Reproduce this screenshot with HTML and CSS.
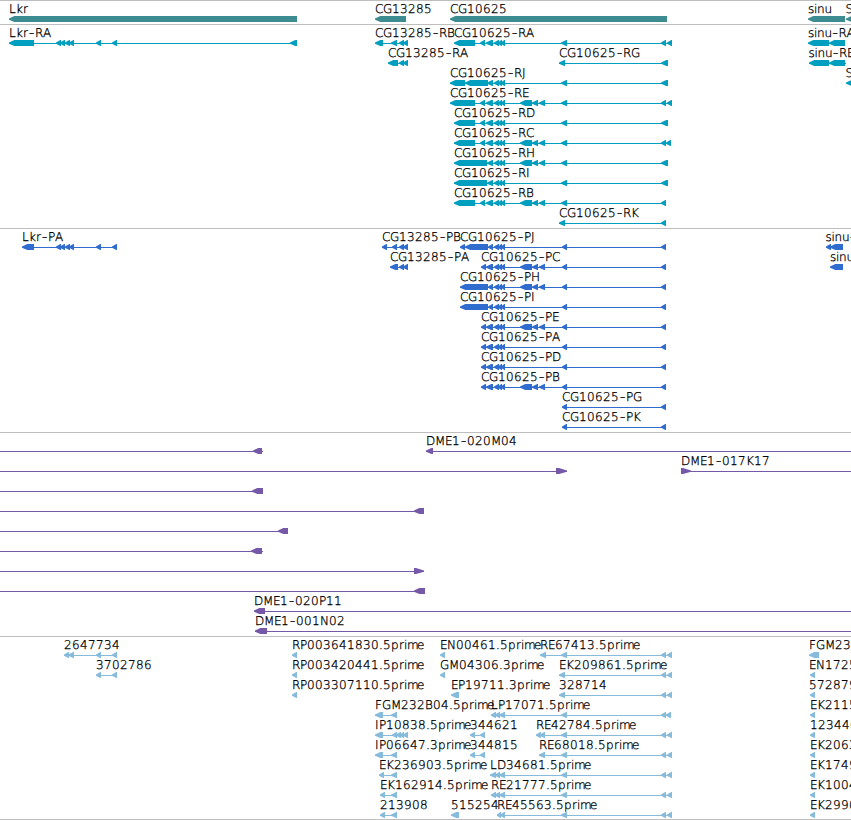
FILE: index.html
```
<!DOCTYPE html>
<html lang="en">
<head>
    <meta charset="UTF-8">
    <meta name="viewport" content="width=device-width, initial-scale=1.0">
    <title>Genome Browser</title>
    <link rel="stylesheet" href="styles.css">
</head>
<body>
    <main class="browser">
        <section class="track gene" id="gene"></section>
        <section class="track transcript" id="transcript"></section>
        <section class="track protein" id="protein"></section>
        <section class="track clone" id="clone"></section>
        <section class="track est" id="est"></section>
    </main>
    <script src="tracks.js"></script>
</body>
</html>
```

FILE: styles.css
```
body {
    margin: 0;
    background-color: #fff;
    overflow: hidden;
}
.browser {
    display: flex;
    flex-direction: column;
    width: 851px;
    height: 820px;
}
.track {
    box-sizing: border-box;
    padding-bottom: 3px;
    border-top: 1px solid #bebebe;
}
.row {
    display: block;
    width: 100%;
    height: 20px;
    overflow: hidden;
}
.row + .row {
    overflow: visible;
}
.label {
    font-family: "DejaVu Sans Light", "DejaVu Sans", sans-serif;
    font-weight: 200;
    font-size: 12px;
    fill: #000;
    stroke: #000;
    stroke-width: 0.3px;
    text-rendering: geometricPrecision;
}
.dash {
    font-size: 16px;
}
.gene {
    fill: #3d8c91;
}
.transcript {
    fill: #009fbf;
}
.protein {
    fill: #306bce;
}
.clone {
    fill: #7558a8;
}
.est {
    height: 184px;
    padding-bottom: 2px;
    border-bottom: 1px solid #bebebe;
    fill: #86bbdc;
}
.gene .row,
.transcript .row,
.protein .row,
.clone .row,
.est .row {
    overflow: visible;
}
```

FILE: tracks.js
```
// Each row is a list of features: [label, blocks, options]
// blocks are "start-end" pairs, options: right, from, to (extent of the line), x (label)
const small = ' 494-499 498-502 501-505';
const exons = ' 520-532 532-538 539-545';
const utr = '454-475 480-485 486-493' + small;
const cds = '481-486 486-493' + small;
const mid = ' 561-567';
const pEnd = ' 562-567 661-666';
const eEnd = ' 661-666 667-672';

const tracks = {
    gene: [
        [['Lkr', '9-297'], ['CG13285', '375-406'], ['CG10625', '450-667'], ['sinu', '808-845'], ['S', '846-870', {x: 845.5}]]
    ],
    transcript: [
        [['Lkr-RA', '9-34 56-61 60-65 65-70 69-74 96-101 112-117 290-297'],
         ['CG13285-RB', '375-383 391-397 399-404 403-408'],
         ['CG10625-RA', utr + mid + eEnd],
         ['sinu-RA', '808-829 829-845']],
        [['CG13285-RA', '388-398 399-404 403-408'],
         ['CG10625-RG', '559-565 661-668'],
         ['sinu-RE', '809-829 829-845', {to: 846, x: 808.5}]],
        [['CG10625-RJ', '450-465 465-488 487-493' + small + mid + ' 661-668'],
         ['S', '846-860', {x: 845.5}]],
        [['CG10625-RE', '450-475 480-485 486-493' + small + exons + mid + eEnd]],
        [['CG10625-RD', utr + mid + ' 661-668']],
        [['CG10625-RC', utr + exons + mid + ' 661-666 666-671']],
        [['CG10625-RH', '454-487 487-493' + small + exons + mid + ' 661-668']],
        [['CG10625-RI', '454-487 487-493' + small + mid + ' 661-668']],
        [['CG10625-RB', utr + exons + mid + ' 661-666']],
        [['CG10625-RK', '559-565 661-666']]
    ],
    protein: [
        [['Lkr-PA', '22-34 56-61 60-65 65-70 69-74 96-101 112-117'],
         ['CG13285-PB', '382-387 392-397 399-404 403-408'],
         ['CG10625-PJ', '460-465 465-488 488-493' + small + pEnd],
         ['sinu-PA', '826-831 830-843', {x: 825.5}]],
        [['CG13285-PA', '390-398 399-404 403-408'],
         ['CG10625-PC', cds + exons + pEnd],
         ['sinu-PE', '830-843']],
        [['CG10625-PH', '460-488 488-493' + small + exons + pEnd]],
        [['CG10625-PI', '460-488 488-493' + small + pEnd]],
        [['CG10625-PE', cds + exons + pEnd]],
        [['CG10625-PA', cds + pEnd]],
        [['CG10625-PD', cds + pEnd]],
        [['CG10625-PB', cds + exons + pEnd]],
        [['CG10625-PG', '562-567 661-666']],
        [['CG10625-PK', '562-567 661-666']]
    ],
    clone: [
        [['', '253-262', {from: 0, to: 263}], ['DME1-020M04', '426-433', {to: 851}]],
        [['', '556-567', {from: 0, right: true}], ['DME1-017K17', '681-691', {right: true, to: 851}]],
        [['', '252-263', {from: 0}]],
        [['', '414-424', {from: 0}]],
        [['', '278-288', {from: 0}]],
        [['', '251-262', {from: 0, to: 263}]],
        [['', '414-424', {from: 0, right: true}]],
        [['', '414-425', {from: 0}]],
        [['DME1-020P11', '254-265', {to: 851}]],
        [['DME1-001N02', '255-267', {to: 851}]]
    ],
    est: [
        [['2647734', '64-69 68-74 96-101 112-117'], ['RP003641830.5prime', '292-297'],
         ['EN00461.5prime', '440-445'], ['RE67413.5prime', '540-546' + mid + eEnd], ['FGM232B04.5prime', '809-819']],
        [['3702786', '96-101 112-117'], ['RP003420441.5prime', '292-297'],
         ['GM04306.3prime', '440-445'], ['EK209861.5prime', '559-565' + eEnd], ['EN17250.5prime', '810-815', {x: 809}]],
        [['RP003307110.5prime', '292-297'], ['EP19711.3prime', '451-459'],
         ['328714', '559-565' + eEnd], ['572879', '810-815', {x: 809}]],
        [['FGM232B04.5prime', '375-383 391-397'], ['LP17071.5prime', '491-496 495-500 499-505' + mid + ' 661-666 666-671'],
         ['EK211500.5prime', '810-815']],
        [['IP10838.5prime', '375-383 392-397 396-401 400-404 403-408'], ['344621', '470-475 480-485'],
         ['RE42784.5prime', '536-541 540-545' + mid + eEnd], ['123440', '810-815']],
        [['IP06647.3prime', '375-383 391-397'], ['344815', '470-475 480-485'],
         ['RE68018.5prime', '539-545' + mid + eEnd], ['EK206300.5prime', '810-815']],
        [['EK236903.5prime', '379-384 391-397'], ['LD34681.5prime', '490-496 495-500 499-505' + mid + eEnd],
         ['EK174900.5prime', '810-815']],
        [['EK162914.5prime', '380-385 391-397'], ['RE21777.5prime', '491-496 495-500 499-505' + mid + eEnd],
         ['EK100400.5prime', '810-815']],
        [['213908', '380-385 391-397'], ['515254', '451-459'],
         ['RE45563.5prime', '497-501 500-505' + mid + eEnd], ['EK299000.5prime', '810-815']]
    ]
};

// pixel advance of each letter, digits and the rest are 8
const advance = {
    G: 9, D: 9, H: 9, N: 9, M: 10, P: 7, L: 7, F: 7, E: 7, I: 4, J: 4,
    '-': 7, '.': 4, k: 7, r: 5, s: 6, i: 3, m: 10, n: 7.5, u: 7
};

function drawLabel(text, start) {
    let x = start;
    const xs = [];
    for (const c of text) {
        xs.push(c === '-' ? x + 0.7 : x);
        x += advance[c] || 8;
    }
    // the dash is wider than the font's own
    const dashed = text.replace('-', '<tspan class="dash" y="13">-</tspan><tspan y="12">') +
        (text.includes('-') ? '</tspan>' : '');
    return `<text class="label" x="${xs.join(' ')}" y="12">${dashed}</text>`;
}

function drawBlock(start, end, right) {
    const head = Math.min(right ? 8 : 6, end - start);
    const tip = right ? end : start;
    const neck = right ? end - head : start + head - 0.7;
    const back = right ? start : end;
    return `<polygon points="${tip},17.5 ${neck},15 ${back},15 ${back},21 ${neck},21 ${tip},18.7"/>`;
}

function drawFeature([label, blocks, options = {}]) {
    const list = blocks.split(' ').map(b => b.split('-').map(Number));
    const first = list[0][0];
    const from = options.from ?? first;
    const to = options.to ?? list[list.length - 1][1];
    let out = list.map(([s, e]) => drawBlock(s, e, options.right)).join('');
    if (list.length > 1 || options.to || options.from === 0) {
        out += `<rect x="${from}" y="18" width="${to - from}" height="1"/>`;
    }
    if (label) {
        out += drawLabel(label, options.x ?? first);
    }
    return out;
}

for (const id in tracks) {
    document.getElementById(id).innerHTML = tracks[id]
        .map(row => `<svg class="row">${row.map(drawFeature).join('')}</svg>`)
        .join('');
}
```
